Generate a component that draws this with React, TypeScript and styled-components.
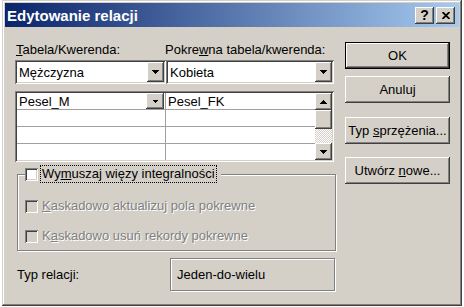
import styled, { createGlobalStyle, css } from "styled-components";

const GlobalStyle = createGlobalStyle`
  html,
  body {
    margin: 0;
    padding: 0;
  }

  body {
    background: #ffffff;
    color: #000000;
    font-family: "Liberation Sans", Arial, sans-serif;
    font-size: 13px;
  }
`;

const raised = css`
  background: #d4d0c8;
  box-shadow: inset -1px -1px #404040, inset 1px 1px #ffffff,
    inset -2px -2px #808080, inset 2px 2px #d4d0c8;
`;

const sunken = css`
  box-shadow: inset 1px 1px #808080, inset -1px -1px #ffffff,
    inset 2px 2px #404040, inset -2px -2px #d4d0c8;
`;

const etched = css`
  border: 1px solid #808080;
  box-shadow: inset 1px 1px #ffffff, 1px 1px #ffffff;
`;

const Window = styled.div`
  box-sizing: border-box;
  width: 460px;
  height: 306px;
  margin-left: 2px;
  padding: 3px;
  display: flex;
  flex-direction: column;
  background: #d4d0c8;
  box-shadow: inset -1px -1px #404040, inset 1px 1px #d4d0c8,
    inset -2px -2px #808080, inset 2px 2px #ffffff;
`;

const TitleBar = styled.div`
  height: 24px;
  display: flex;
  align-items: center;
  padding: 0 4px 0 2px;
  background: linear-gradient(to right, #0a246a, #a6caf0);
`;

const Title = styled.span`
  flex: 1;
  color: #ffffff;
  font-size: 15px;
  font-weight: bold;
`;

const TitleButtons = styled.div`
  display: flex;
  gap: 2px;
`;

const TitleButton = styled.div`
  ${raised};
  width: 19px;
  height: 17px;
  display: flex;
  align-items: center;
  justify-content: center;
  font-size: 14px;
  font-weight: bold;
  line-height: 1;
`;

const Body = styled.div`
  flex: 1;
  display: flex;
  gap: 10px;
  padding: 15px 0 0 10px;
`;

const MainColumn = styled.div`
  width: 320px;
  display: flex;
  flex-direction: column;
`;

const LabelRow = styled.div`
  display: grid;
  grid-template-columns: 149px 1fr;
  padding-left: 1px;
  line-height: 16px;
`;

const ComboRow = styled.div`
  display: grid;
  grid-template-columns: 151px 168px;
  margin-top: 2px;
`;

const Combo = styled.div`
  box-sizing: border-box;
  height: 24px;
  padding: 2px;
  display: flex;
  align-items: center;
  background: #ffffff;
  ${sunken};
`;

const ComboText = styled.span`
  flex: 1;
  padding-left: 2px;
`;

const DropButton = styled.div<{ $small?: boolean }>`
  ${raised};
  width: ${(p) => (p.$small ? 18 : 17)}px;
  align-self: stretch;
  display: flex;
  align-items: center;
  justify-content: center;
  margin-right: ${(p) => (p.$small ? 1 : 0)}px;
`;

const Table = styled.div`
  box-sizing: border-box;
  width: 319px;
  height: 71px;
  margin-top: 7px;
  padding: 2px;
  display: flex;
  background: #ffffff;
  ${sunken};
`;

const Cells = styled.div`
  flex: 1;
  display: grid;
  grid-template-columns: 149px 1fr;
  grid-auto-rows: 17px;
  overflow: hidden;
`;

const Cell = styled.div<{ $first?: boolean }>`
  box-sizing: border-box;
  display: flex;
  align-items: center;
  padding-left: 2px;
  border-bottom: 1px solid #a0a0a0;
  border-right: ${(p) => (p.$first ? "1px solid #a0a0a0" : "none")};
`;

const CellText = styled.span`
  flex: 1;
`;

const ScrollBar = styled.div`
  width: 17px;
  display: flex;
  flex-direction: column;
`;

const ScrollButton = styled.div`
  ${raised};
  height: 17px;
  display: flex;
  align-items: center;
  justify-content: center;
`;

const Thumb = styled.div`
  ${raised};
  height: 19px;
`;

const Track = styled.div`
  flex: 1;
  background-color: #ffffff;
  background-image: repeating-conic-gradient(#d4d0c8 0 25%, #ffffff 0 50%);
  background-size: 2px 2px;
`;

const Group = styled.fieldset`
  box-sizing: border-box;
  width: 319px;
  min-width: 0;
  margin: 3px 0 0 2px;
  padding: 0 0 6px 7px;
  ${etched};
`;

const Legend = styled.legend`
  display: flex;
  align-items: center;
  padding: 0 4px 0 0;
  background: #d4d0c8;
`;

const Check = styled.span<{ $disabled?: boolean }>`
  flex: none;
  width: 13px;
  height: 13px;
  background: ${(p) => (p.$disabled ? "#d4d0c8" : "#ffffff")};
  ${sunken};
`;

const FocusLabel = styled.span`
  margin-left: 2px;
  padding: 0 1px;
  border: 1px dotted #000000;
  line-height: 16px;
`;

const OptionList = styled.div`
  display: flex;
  flex-direction: column;
  gap: 14px;
  padding-top: 15px;
`;

const Option = styled.div`
  display: flex;
  align-items: center;
  gap: 4px;
  line-height: 16px;
`;

const DisabledText = styled.span`
  color: #808080;
  text-shadow: 1px 1px #ffffff;
`;

const RelationRow = styled.div`
  display: flex;
  align-items: center;
  justify-content: space-between;
  margin: 7px 0 0 2px;
`;

const RelationBox = styled.div`
  box-sizing: border-box;
  width: 165px;
  height: 33px;
  display: flex;
  align-items: center;
  padding-left: 6px;
  ${etched};
`;

const ButtonColumn = styled.div`
  width: 105px;
  display: flex;
  flex-direction: column;
`;

const Button = styled.button<{ $default?: boolean; $gap?: number }>`
  ${raised};
  box-sizing: border-box;
  height: 27px;
  margin-top: ${(p) => p.$gap ?? 0}px;
  padding: 0;
  border: ${(p) => (p.$default ? "1px solid #000000" : "none")};
  font: inherit;
  color: #000000;
`;

function Arrow({ dir, w = 7 }: { dir: "up" | "down"; w?: number }) {
  const h = Math.ceil(w / 2);
  const points =
    dir === "down" ? `0,0 ${w},0 ${w / 2},${h}` : `0,${h} ${w},${h} ${w / 2},0`;
  return (
    <svg width={w} height={h} viewBox={`0 0 ${w} ${h}`} aria-hidden="true">
      <polygon points={points} fill="#000000" shapeRendering="crispEdges" />
    </svg>
  );
}

function CloseGlyph() {
  return (
    <svg width="8" height="7" viewBox="0 0 8 7" aria-hidden="true">
      <path d="M0.5 0 L7.5 7 M7.5 0 L0.5 7" stroke="#000000" strokeWidth="1.8" />
    </svg>
  );
}

function App() {
  return (
    <>
      <GlobalStyle />
      <Window>
        <TitleBar>
          <Title>Edytowanie relacji</Title>
          <TitleButtons>
            <TitleButton>?</TitleButton>
            <TitleButton>
              <CloseGlyph />
            </TitleButton>
          </TitleButtons>
        </TitleBar>

        <Body>
          <MainColumn>
            <LabelRow>
              <span>
                <u>T</u>abela/Kwerenda:
              </span>
              <span>
                Pokre<u>w</u>na tabela/kwerenda:
              </span>
            </LabelRow>

            <ComboRow>
              <Combo>
                <ComboText>Mężczyzna</ComboText>
                <DropButton>
                  <Arrow dir="down" />
                </DropButton>
              </Combo>
              <Combo>
                <ComboText>Kobieta</ComboText>
                <DropButton>
                  <Arrow dir="down" />
                </DropButton>
              </Combo>
            </ComboRow>

            <Table>
              <Cells>
                <Cell $first>
                  <CellText>Pesel_M</CellText>
                  <DropButton $small>
                    <Arrow dir="down" w={5} />
                  </DropButton>
                </Cell>
                <Cell>Pesel_FK</Cell>
                <Cell $first />
                <Cell />
                <Cell $first />
                <Cell />
                <Cell $first />
                <Cell />
              </Cells>
              <ScrollBar>
                <ScrollButton>
                  <Arrow dir="up" />
                </ScrollButton>
                <Thumb />
                <Track />
                <ScrollButton>
                  <Arrow dir="down" />
                </ScrollButton>
              </ScrollBar>
            </Table>

            <Group>
              <Legend>
                <Check />
                <FocusLabel>
                  Wy<u>m</u>uszaj więzy integralności
                </FocusLabel>
              </Legend>
              <OptionList>
                <Option>
                  <Check $disabled />
                  <DisabledText>
                    <u>K</u>askadowo aktualizuj pola pokrewne
                  </DisabledText>
                </Option>
                <Option>
                  <Check $disabled />
                  <DisabledText>
                    K<u>a</u>skadowo usuń rekordy pokrewne
                  </DisabledText>
                </Option>
              </OptionList>
            </Group>

            <RelationRow>
              <span>Typ relacji:</span>
              <RelationBox>Jeden-do-wielu</RelationBox>
            </RelationRow>
          </MainColumn>

          <ButtonColumn>
            <Button $default>OK</Button>
            <Button $gap={7}>Anuluj</Button>
            <Button $gap={14}>
              Typ <u>s</u>przężenia...
            </Button>
            <Button $gap={13}>
              Utwórz <u>n</u>owe...
            </Button>
          </ButtonColumn>
        </Body>
      </Window>
    </>
  );
}

export default App;
